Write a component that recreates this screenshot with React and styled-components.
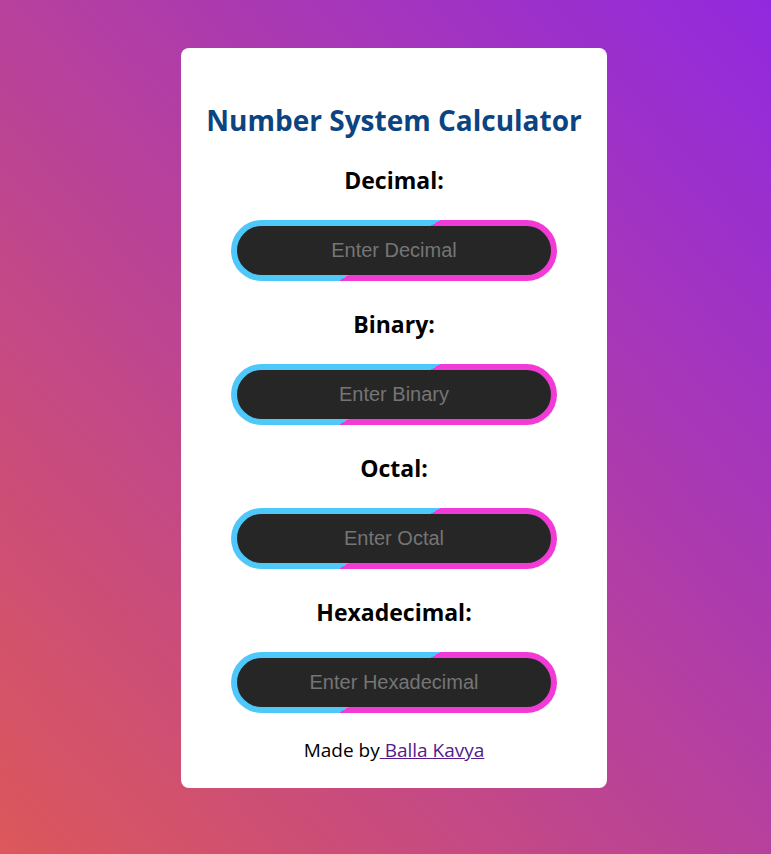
import { useState } from "react";
import styled, { createGlobalStyle } from "styled-components";

const Global = createGlobalStyle`
    html, body {
        margin: 0;
        padding: 0;
    }
    body {
        min-height: 854px;
        background: linear-gradient(to top right, #dc585a, #9129df);
        font-family: "Open Sans", "Noto Sans", sans-serif;
    }
`

const fields = [
    { key: "decimal", label: "Decimal:", placeholder: "Enter Decimal" },
    { key: "binary", label: "Binary:", placeholder: "Enter Binary" },
    { key: "octal", label: "Octal:", placeholder: "Enter Octal" },
    { key: "hex", label: "Hexadecimal:", placeholder: "Enter Hexadecimal" },
];

export default function App() {
    const [valores, setValores] = useState({ decimal: "", binary: "", octal: "", hex: "" });

    function mudar(key, v) {
        setValores({ ...valores, [key]: v });
    }

    return (
        <>
            <Global />
            <Pagina>
                <Card>
                    <Titulo>Number System Calculator</Titulo>
                    {fields.map((f) => (
                        <Grupo key={f.key}>
                            <Rotulo>{f.label}</Rotulo>
                            <Moldura>
                                <Campo
                                    type="text"
                                    value={valores[f.key]}
                                    onChange={(e) => mudar(f.key, e.target.value)}
                                    placeholder={f.placeholder}
                                />
                            </Moldura>
                        </Grupo>
                    ))}
                    <Rodape>
                        Made by<Autor href="#"> Balla Kavya</Autor>
                    </Rodape>
                </Card>
            </Pagina>
        </>
    )
}

const Pagina = styled.div`
    display: flex;
    justify-content: center;
    padding: 48px 0 0 17px;
`
const Card = styled.div`
    width: 426px;
    box-sizing: border-box;
    background-color: #FFFFFF;
    border-radius: 8px;
    padding: 55px 0 26px;
    display: flex;
    flex-direction: column;
    align-items: center;
`
const Titulo = styled.h1`
    margin: 0;
    font-size: 28px;
    line-height: 34px;
    font-weight: 700;
    color: #0b4480;
    white-space: nowrap;
`
const Grupo = styled.div`
    display: flex;
    flex-direction: column;
    align-items: center;
    margin-top: 29px;
`
const Rotulo = styled.h3`
    margin: 0;
    font-size: 23px;
    line-height: 29px;
    font-weight: 700;
    color: #000000;
`
const Moldura = styled.div`
    margin-top: 25px;
    width: 326px;
    height: 61px;
    box-sizing: border-box;
    padding: 6px;
    border-radius: 31px;
    background: linear-gradient(149deg, #4dc8f8 49%, #f23ad6 49%);
`
const Campo = styled.input`
    width: 100%;
    height: 100%;
    box-sizing: border-box;
    border: none;
    outline: none;
    border-radius: 25px;
    background-color: #262626;
    color: #FFFFFF;
    text-align: center;
    font-family: "Liberation Sans", Arial, sans-serif;
    font-size: 20px;

    &::placeholder {
        color: #757575;
    }
`
const Rodape = styled.p`
    margin: 26px 0 0;
    font-size: 19px;
    line-height: 23px;
    color: #000000;
`
const Autor = styled.a`
    color: #551a8b;
    text-decoration: underline;
    white-space: pre;
`
